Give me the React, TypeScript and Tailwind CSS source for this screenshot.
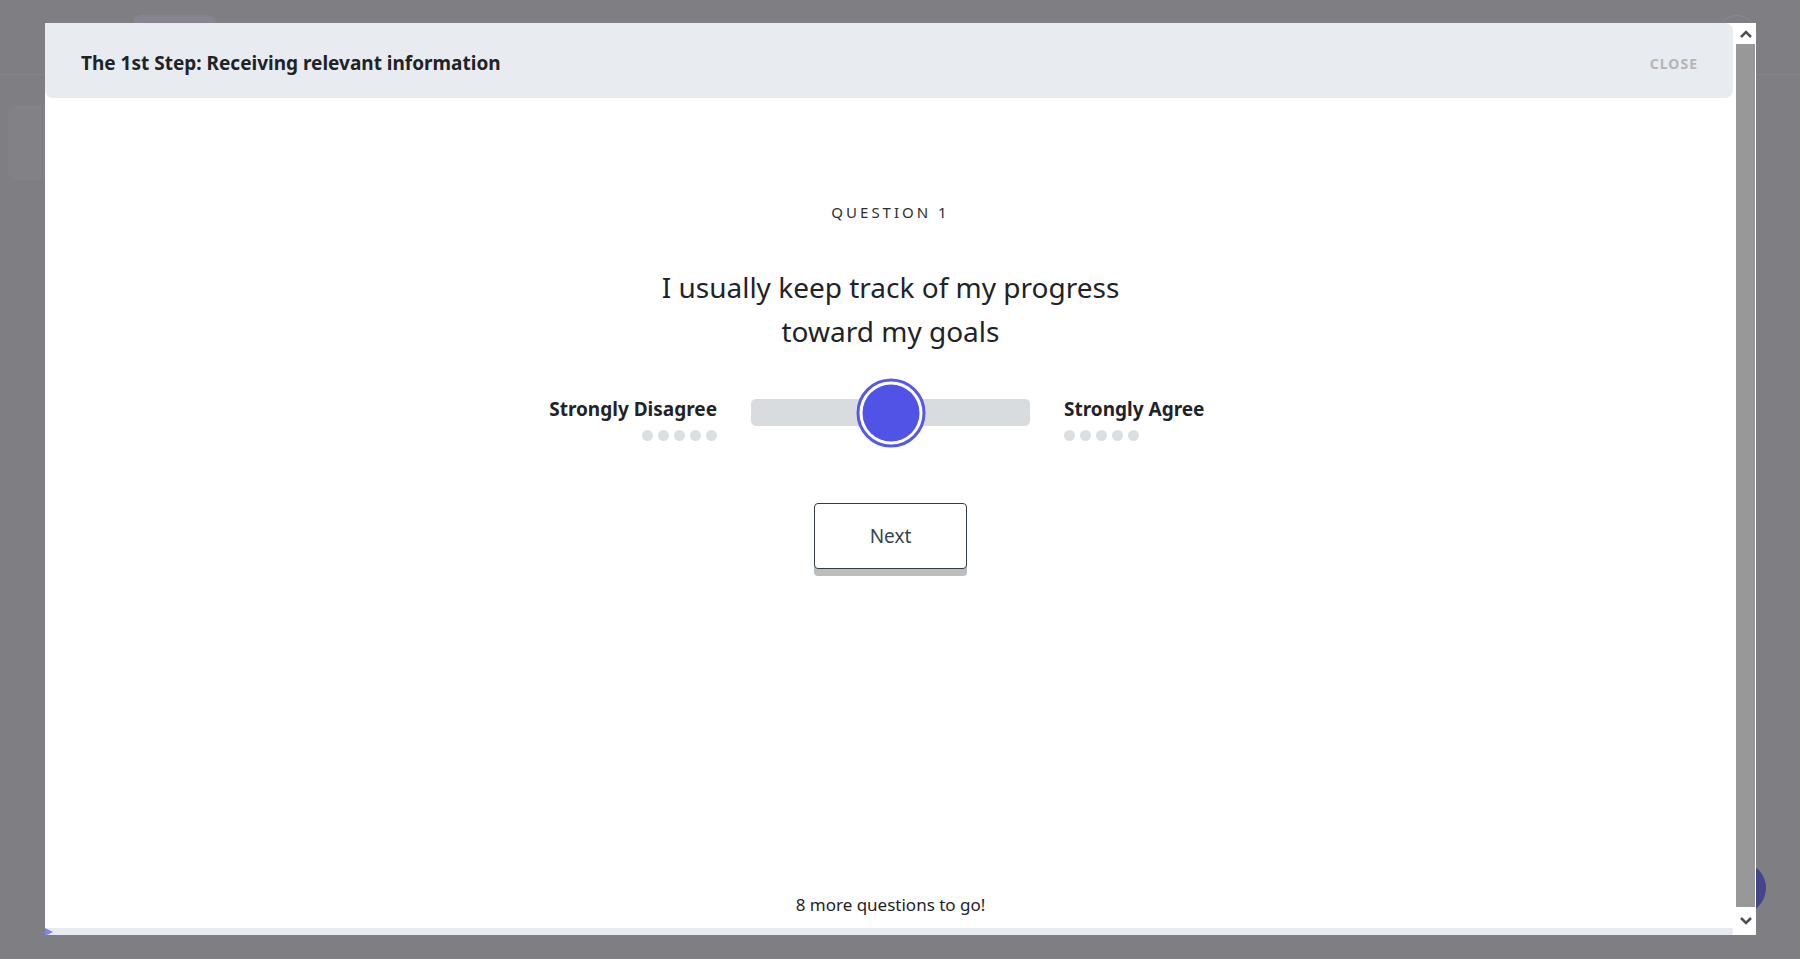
import { useState } from "react";

const Dots = () => (
  <div className="flex gap-[5px]">
    {[0, 1, 2, 3, 4].map((i) => (
      <span key={i} className="w-[11px] h-[11px] rounded-full bg-[#dcdfe2]" />
    ))}
  </div>
);

const Chevron = ({ up }: { up?: boolean }) => (
  <svg width="12" height="8" viewBox="0 0 12 8" className={up ? "" : "rotate-180"}>
    <path d="M1 7 L6 2 L11 7" fill="none" stroke="#505050" strokeWidth="2.5" />
  </svg>
);

const App = () => {
  const [value] = useState(50);

  return (
    <div
      className="relative w-full h-screen overflow-hidden bg-[#7f7e83]"
      style={{ fontFamily: '"Noto Sans", "Open Sans", sans-serif' }}
    >
      {/* page behind the overlay */}
      <div className="h-[75px] border-b border-[#86858a]" />
      <div className="absolute left-[133px] top-[15px] w-[83px] h-[30px] rounded-lg bg-[#858490]" />
      <div className="absolute left-[8px] top-[105px] w-[60px] h-[75px] rounded-lg bg-[#828186]" />
      <div className="absolute left-[1717px] top-[15px] w-[40px] h-[40px] rounded-full border border-[#8a8a94]" />
      <div className="absolute left-[1714px] top-[862px] w-[52px] h-[52px] rounded-full bg-[#45468a]" />

      {/* modal */}
      <div className="absolute left-[45px] top-[23px] w-[1711px] h-[912px] bg-white flex">
        <div className="flex-1 flex flex-col">
          <div className="h-[75px] mr-[3px] pt-[6px] bg-[#e8ebef] rounded-b-lg rounded-tr-lg flex items-center justify-between pl-[36px] pr-[35px]">
            <h2 className="text-[19px] font-bold text-[#1f2328]">
              The 1st Step: Receiving relevant information
            </h2>
            <button className="text-[14px] font-bold tracking-[1px] text-[#b5b5b5]">CLOSE</button>
          </div>

          <div className="flex-1 flex flex-col items-center">
            <span className="mt-[104px] text-[15px] leading-[20px] tracking-[3px] text-[#2b2f33]">
              QUESTION 1
            </span>
            <p className="mt-[43px] text-[28px] leading-[44px] text-[#1f2328] text-center">
              I usually keep track of my progress
              <br />
              toward my goals
            </p>

            <div className="mt-[25px] h-[69px] w-full grid grid-cols-[1fr_auto_1fr] items-start gap-[34px]">
              <div className="mt-[18px] flex flex-col items-end gap-[8px]">
                <span className="text-[19px] leading-[26px] font-bold text-[#1f2328]">Strongly Disagree</span>
                <Dots />
              </div>
              <div className="relative mt-[21px] w-[279px] h-[27px] rounded-[5px] bg-[#d8dcdf]">
                <div
                  className="absolute top-1/2 -translate-x-1/2 -translate-y-1/2 w-[69px] h-[69px] rounded-full border-[3px] border-[#5558ec] bg-white p-[3px]"
                  style={{ left: `${value}%` }}
                >
                  <div className="w-full h-full rounded-full bg-[#5053e6]" />
                </div>
              </div>
              <div className="mt-[18px] flex flex-col items-start gap-[8px]">
                <span className="text-[19px] leading-[26px] font-bold text-[#1f2328]">Strongly Agree</span>
                <Dots />
              </div>
            </div>

            <button className="mt-[56px] w-[153px] h-[66px] rounded-[4px] border border-[#2f3d48] bg-white text-[19px] text-[#34444f] shadow-[0_7px_0_#bdbdbd]">
              Next
            </button>

            <div className="flex-1" />
            <p className="mb-[11px] text-[17px] text-[#1f2328]">8 more questions to go!</p>
          </div>

          <div className="relative h-[7px] mr-[3px] bg-[#e8ebef]">
            <div className="absolute left-0 top-0 w-0 h-0 border-t-[4px] border-b-[4px] border-l-[8px] border-t-transparent border-b-transparent border-l-[#7f82f5]" />
          </div>
        </div>

        {/* scrollbar */}
        <div className="w-[20px] flex flex-col">
          <div className="h-[21px] flex items-center justify-center">
            <Chevron up />
          </div>
          <div className="flex-1 w-[19px] bg-[#989898]" />
          <div className="h-[28px] flex items-center justify-center">
            <Chevron />
          </div>
        </div>
      </div>
    </div>
  );
};

export default App;
